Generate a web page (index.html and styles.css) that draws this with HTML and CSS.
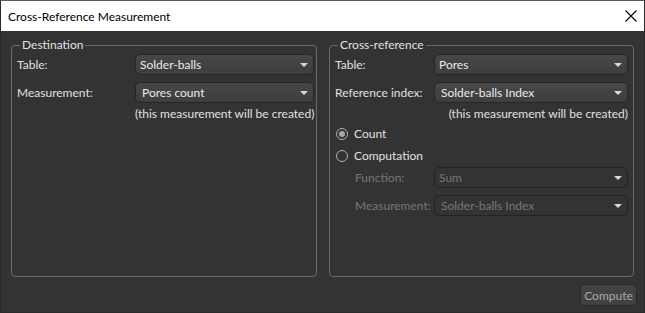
FILE: index.html
```html
<!DOCTYPE html>
<html>
<head>
<meta charset="utf-8">
<link rel="stylesheet" href="styles.css">
</head>
<body>
<div class="window">
  <div class="titlebar">
    <span class="title">Cross-Reference Measurement</span>
    <svg class="close" width="12" height="12" viewBox="0 0 12 12"><path d="M0.5 0.5 L11.5 11.5 M11.5 0.5 L0.5 11.5" stroke="#000" stroke-width="1.1" fill="none"/></svg>
  </div>
  <div class="content">
    <div class="groups">
      <fieldset class="group">
        <legend>Destination</legend>
        <div class="form form-left">
          <label class="lbl">Table:</label>
          <div class="combo"><span class="val">Solder-balls</span><span class="arrow"></span></div>
          <label class="lbl">Measurement:</label>
          <div class="combo editable"><span class="val">Pores count</span><span class="arrow"></span></div>
          <span></span>
          <div class="note">(this measurement will be created)</div>
        </div>
      </fieldset>
      <fieldset class="group">
        <legend>Cross-reference</legend>
        <div class="form form-right">
          <label class="lbl">Table:</label>
          <div class="combo"><span class="val">Pores</span><span class="arrow"></span></div>
          <label class="lbl">Reference index:</label>
          <div class="combo editable"><span class="val">Solder-balls Index</span><span class="arrow"></span></div>
          <span></span>
          <div class="note">(this measurement will be created)</div>
        </div>
        <div class="radios">
          <div class="radio checked"><span class="dot"></span><span>Count</span></div>
          <div class="radio"><span class="dot"></span><span>Computation</span></div>
        </div>
        <div class="form form-sub">
          <label class="lbl disabled">Function:</label>
          <div class="combo off"><span class="val">Sum</span><span class="arrow"></span></div>
          <label class="lbl disabled">Measurement:</label>
          <div class="combo off editable"><span class="val">Solder-balls Index</span><span class="arrow"></span></div>
        </div>
      </fieldset>
    </div>
    <div class="buttons">
      <button class="btn">Compute</button>
    </div>
  </div>
</div>
</body>
</html>
```
FILE: styles.css
```css
* { box-sizing: border-box; }
html, body { margin: 0; padding: 0; background: #333333; }
body {
  font-family: "Lato", "Open Sans", sans-serif;
  font-size: 12px;
  color: #e0e0e0;
  white-space: nowrap;
}
.window {
  width: 645px;
  height: 313px;
  border: 1px solid #2a2a2a;
  border-top-color: #5a5a5a;
  display: flex;
  flex-direction: column;
  background: #333333;
}
.titlebar {
  height: 30px;
  background: #ffffff;
  display: flex;
  align-items: center;
  justify-content: space-between;
  padding: 0 7px 0 7px;
  color: #000;
}
.title { font-size: 12px; }
.content {
  flex: 1;
  display: flex;
  flex-direction: column;
  padding: 6px 10px 6px 10px;
}
.groups {
  flex: 1;
  display: grid;
  grid-template-columns: 306px 305px;
  column-gap: 12px;
}
.group {
  margin: 0;
  border: 1px solid #6a6a6a;
  border-radius: 4px;
  padding: 1px 5px 0 5px;
  min-width: 0;
}
.group legend {
  padding: 0 2px;
  margin-left: 3px;
  line-height: 16px;
  color: #e0e0e0;
}
.form {
  display: grid;
  row-gap: 7px;
  align-items: center;
}
.form-left { grid-template-columns: 118px 1fr; }
.form-right { grid-template-columns: 99px 1fr; }
.form-sub { grid-template-columns: 79px 1fr; margin-left: 20px; }
.lbl { line-height: 16px; }
.lbl.disabled { color: #777777; }
.combo {
  height: 21px;
  border: 1px solid #262626;
  border-radius: 5px;
  background: linear-gradient(#474747, #3e3e3e);
  display: flex;
  align-items: center;
  justify-content: space-between;
  padding: 0 5px 0 4px;
  color: #eaeaea;
}
.combo.editable { padding-left: 6px; }
.combo.off {
  background: #333333;
  border-color: #232323;
  color: #777777;
}
.arrow {
  width: 0; height: 0;
  border-left: 4px solid transparent;
  border-right: 4px solid transparent;
  border-top: 4px solid #d8d8d8;
}
.note {
  text-align: right;
  line-height: 14px;
  margin-top: -3px;
}
.radios {
  display: flex;
  flex-direction: column;
  gap: 6px;
  margin-top: 5px;
  margin-bottom: 3px;
  padding-left: 1px;
}
.radio {
  display: flex;
  align-items: center;
  gap: 6px;
  line-height: 16px;
}
.dot {
  width: 12px; height: 12px;
  border: 1px solid #b0b0b0;
  border-radius: 50%;
  display: flex;
  align-items: center;
  justify-content: center;
}
.radio.checked .dot::after {
  content: "";
  width: 6px; height: 6px;
  border-radius: 50%;
  background: #a8a8a8;
}
.buttons {
  display: flex;
  justify-content: flex-end;
  padding-top: 7px;
  margin-right: -3px;
}
.btn {
  width: 57px;
  height: 22px;
  font-family: inherit;
  font-size: 12px;
  color: #a8a8a8;
  background: #424242;
  border: 1px solid #262626;
  border-radius: 4px;
  padding: 0;
}
```
